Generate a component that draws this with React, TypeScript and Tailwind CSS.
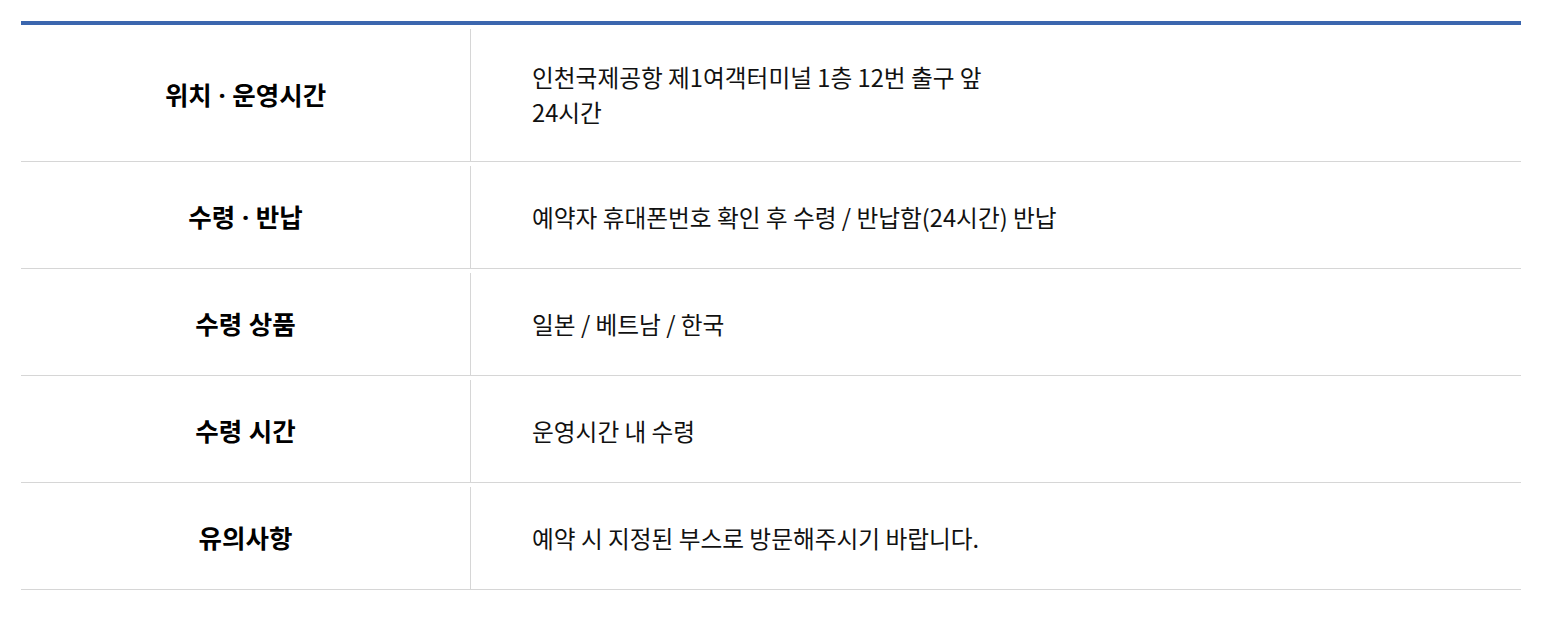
const rows: { label: string; lines: string[]; tall?: boolean }[] = [
  {
    label: "위치 · 운영시간",
    lines: ["인천국제공항 제1여객터미널 1층 12번 출구 앞", "24시간"],
    tall: true,
  },
  { label: "수령 · 반납", lines: ["예약자 휴대폰번호 확인 후 수령 / 반납함(24시간) 반납"] },
  { label: "수령 상품", lines: ["일본 / 베트남 / 한국"] },
  { label: "수령 시간", lines: ["운영시간 내 수령"] },
  { label: "유의사항", lines: ["예약 시 지정된 부스로 방문해주시기 바랍니다."] },
];

const App = () => {
  return (
    <div
      className="min-h-[624px] bg-white pt-[21px] pl-[21px]"
      style={{ fontFamily: '"Noto Sans CJK KR", "Noto Sans", sans-serif' }}
    >
      <div className="w-[1500px] border-t-4 border-[#3b66ae]">
        {rows.map((row) => (
          <div
            key={row.label}
            className={`flex border-b border-[#d6d6d6] pt-[4px] ${row.tall ? "h-[137px]" : "h-[107px]"}`}
          >
            <div
              className="flex w-[450px] shrink-0 items-center justify-center border-r border-[#d6d6d6] text-[25.5px] font-bold text-black"
              style={{ fontFamily: '"Noto Sans", "Noto Sans CJK KR", sans-serif' }}
            >
              {row.label}
            </div>
            <div className="flex flex-col justify-center pl-[61px] text-[23.7px] leading-[35px] text-[#111]">
              {row.lines.map((line) => (
                <p key={line}>{line}</p>
              ))}
            </div>
          </div>
        ))}
      </div>
    </div>
  );
};

export default App;
